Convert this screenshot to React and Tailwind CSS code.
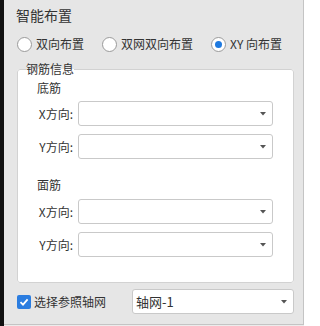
import React from "react";

const font = { fontFamily: '"Noto Sans CJK SC", "Noto Sans", sans-serif' };

function Radio({ label, checked, width }) {
    return (
        <div className="flex items-center h-[20px]" style={width ? { width } : undefined}>
            <span className="w-[15px] h-[15px] rounded-full border border-[#9a9a9a] bg-white flex items-center justify-center shrink-0">
                {checked && <span className="w-[7px] h-[7px] rounded-full bg-[#1f7ae0]" />}
            </span>
            <span className="ml-[4px] text-[12px] leading-[16px] text-[#333]">{label}</span>
        </div>
    );
}

function Caret() {
    return (
        <svg width="6" height="4" viewBox="0 0 6 4" className="shrink-0">
            <path d="M0 0 L6 0 L3 3.5 Z" fill="#555" />
        </svg>
    );
}

function SelectBox({ value, className }) {
    return (
        <div className={"h-[25px] bg-white border border-[#c9c9c9] rounded-[3px] flex items-center pl-[3px] pr-[6px] " + className}>
            <span className="flex-1 text-[13px] leading-[16px] text-[#333]">{value}</span>
            <Caret />
        </div>
    );
}

function Row({ label, className }) {
    return (
        <div className={"flex items-center " + className}>
            <div className="w-[36px] text-right text-[12px] leading-[16px] text-[#333]">{label}</div>
            <SelectBox className="ml-[5px] w-[195px]" />
        </div>
    );
}

export default function App() {
    return (
        <div className="w-[304px] h-[326px] flex bg-[#ececec]" style={font}>
            <div className="w-[4px] h-full bg-[#111]" />
            <div className="flex-1 h-[325px] bg-[#e6e6e6] border-r border-b border-[#c4c4c4] pl-[13px] pr-[8px]">
                <div className="pt-[5px] ml-[-1px] text-[14px] leading-[20px] text-[#333]">智能布置</div>

                <div className="flex items-center mt-[9px]">
                    <Radio label="双向布置" width={85} />
                    <Radio label="双网双向布置" width={109} />
                    <Radio label="XY 向布置" checked />
                </div>

                <fieldset className="mt-[8px] w-[277px] bg-white border border-[#d2d2d2] rounded-[3px] pb-[25px]">
                    <legend className="ml-[8px] text-[12px] leading-[14px] text-[#333]">钢筋信息</legend>
                    <div className="pl-[19px]">
                        <div className="mt-[4px] text-[12px] leading-[16px] text-[#333]">底筋</div>
                        <Row label="X方向:" className="mt-[5px]" />
                        <Row label="Y方向:" className="mt-[8px]" />
                        <div className="mt-[18px] text-[12px] leading-[16px] text-[#333]">面筋</div>
                        <Row label="X方向:" className="mt-[6px]" />
                        <Row label="Y方向:" className="mt-[8px]" />
                    </div>
                </fieldset>

                <div className="flex items-center mt-[6px] w-[277px]">
                    <span className="w-[14px] h-[14px] rounded-[2px] bg-[#2b7de0] flex items-center justify-center shrink-0">
                        <svg width="10" height="10" viewBox="0 0 10 10">
                            <path d="M1.5 5.2 L4 7.6 L8.6 2.4" fill="none" stroke="#fff" strokeWidth="1.8" />
                        </svg>
                    </span>
                    <span className="ml-[3px] text-[12px] leading-[16px] text-[#333]">选择参照轴网</span>
                    <SelectBox value="轴网-1" className="ml-auto w-[162px]" />
                </div>
            </div>
        </div>
    );
}
